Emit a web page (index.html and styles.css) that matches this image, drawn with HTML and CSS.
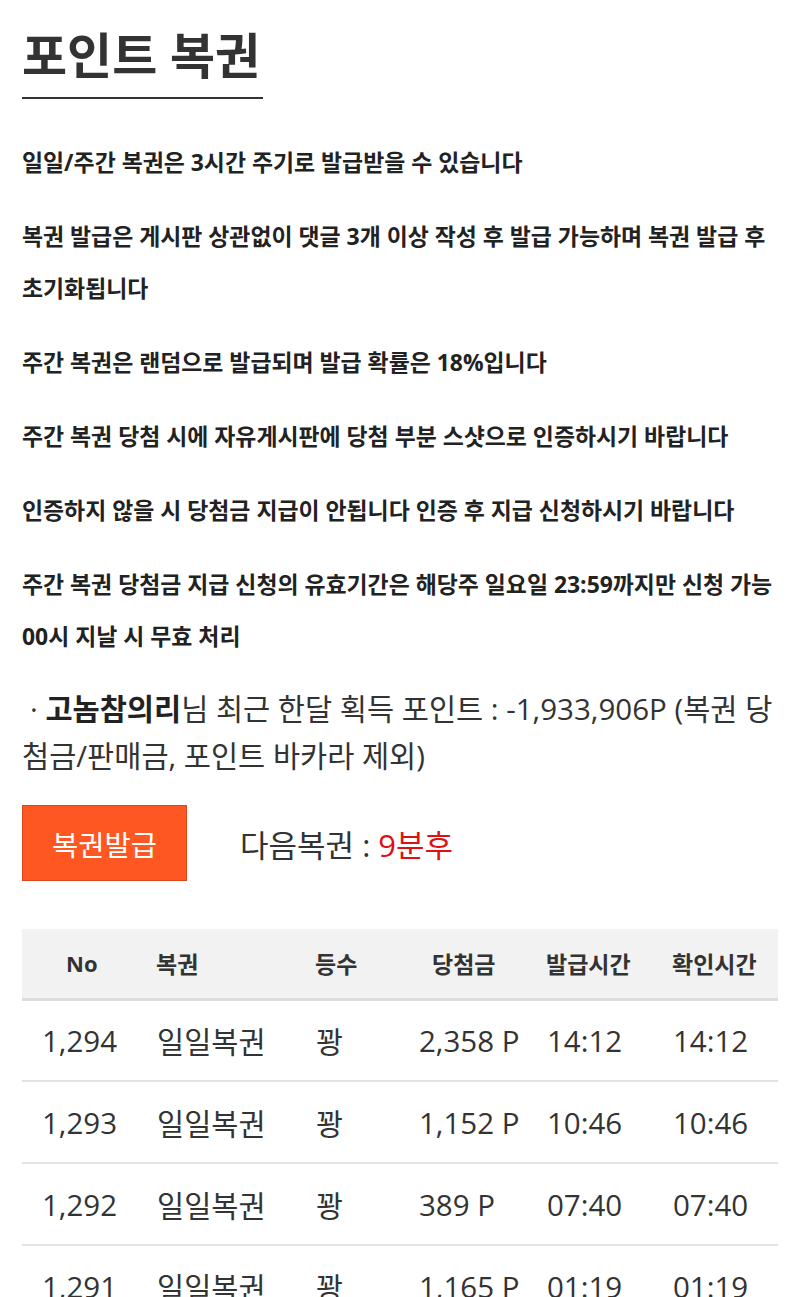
FILE: index.html
```html
<!DOCTYPE html>
<html lang="ko">
<head>
<meta charset="utf-8">
<title>포인트 복권</title>
<link rel="stylesheet" href="styles.css">
</head>
<body>
<div class="page">
  <h1 class="title">포인트 복권</h1>
  <div class="rules">
    <p>일일/주간 복권은 3시간 주기로 발급받을 수 있습니다</p>
    <p>복권 발급은 게시판 상관없이 댓글 3개 이상 작성 후 발급 가능하며 복권 발급 후 초기화됩니다</p>
    <p>주간 복권은 랜덤으로 발급되며 발급 확률은 18%입니다</p>
    <p>주간 복권 당첨 시에 자유게시판에 당첨 부분 스샷으로 인증하시기 바랍니다</p>
    <p>인증하지 않을 시 당첨금 지급이 안됩니다 인증 후 지급 신청하시기 바랍니다</p>
    <p>주간 복권 당첨금 지급 신청의 유효기간은 해당주 일요일 23:59까지만 신청 가능 00시 지날 시 무효 처리</p>
  </div>
  <p class="info"><span class="dot">·</span> <b>고놈참의리</b>님 최근 한달 획득 포인트 : -1,933,906P (복권 당첨금/판매금, 포인트 바카라 제외)</p>
  <div class="issue">
    <button class="issue-btn" type="button">복권발급</button>
    <div class="next">다음복권 : <span class="next-time">9분후</span></div>
  </div>
  <table class="list">
    <colgroup>
      <col class="c1"><col class="c2"><col class="c3"><col class="c4"><col class="c5"><col class="c6">
    </colgroup>
    <thead>
      <tr><th>No</th><th>복권</th><th>등수</th><th>당첨금</th><th>발급시간</th><th>확인시간</th></tr>
    </thead>
    <tbody>
      <tr><td>1,294</td><td>일일복권</td><td>꽝</td><td>2,358 P</td><td>14:12</td><td>14:12</td></tr>
      <tr><td>1,293</td><td>일일복권</td><td>꽝</td><td>1,152 P</td><td>10:46</td><td>10:46</td></tr>
      <tr><td>1,292</td><td>일일복권</td><td>꽝</td><td>389 P</td><td>07:40</td><td>07:40</td></tr>
      <tr><td>1,291</td><td>일일복권</td><td>꽝</td><td>1,165 P</td><td>01:19</td><td>01:19</td></tr>
    </tbody>
  </table>
</div>
</body>
</html>
```

FILE: styles.css
```css
* { box-sizing: border-box; }
html, body { margin: 0; padding: 0; background: #fff; }
body {
  font-family: "Open Sans", "Noto Sans CJK KR", sans-serif;
  color: #333;
}
.page { padding: 0 22px; width: 800px; }

.title {
  display: inline-block;
  margin: 0;
  padding: 24px 3px 11px 0;
  font-size: 49px;
  line-height: 62px;
  font-weight: 700;
  color: #333;
  border-bottom: 2px solid #333;
}

.rules { margin-top: 38px; width: 766px; }
.rules p {
  margin: 0 0 22px;
  font-size: 22.9px;
  line-height: 52px;
  font-weight: 700;
  color: #222;
  word-break: keep-all;
}

.info {
  margin: 0;
  font-size: 29.5px;
  line-height: 47px;
  color: #333;
  text-indent: 8px;
}
.info b { font-weight: 700; color: #222; }

.issue {
  display: flex;
  align-items: center;
  gap: 53px;
  margin-top: 26px;
}
.issue-btn {
  width: 165px;
  height: 76px;
  background: #ff5722;
  border: 1px solid #d9481c;
  color: #fff;
  font-family: "Open Sans", "Noto Sans CJK KR", sans-serif;
  font-size: 28.5px;
  padding: 0;
}
.next { font-size: 31px; color: #333; }
.next-time { color: #dd1111; }

.list {
  margin-top: 48px;
  width: 756px;
  table-layout: fixed;
  border-collapse: collapse;
}
.c1 { width: 134px; }
.c2 { width: 159px; }
.c3 { width: 103px; }
.c4 { width: 128px; }
.c5 { width: 126px; }
.c6 { width: 106px; }

.list th {
  height: 70px;
  background: #f2f2f2;
  border-bottom: 3px solid #ddd;
  font-size: 23px;
  font-weight: 700;
  color: #333;
  text-align: left;
  padding: 0;
}
.list th:nth-child(1) { padding-left: 44px; font-size: 22px; }
.list th:nth-child(4) { padding-left: 14px; }

.list td {
  height: 82px;
  border-bottom: 2px solid #e3e3e3;
  font-size: 29.5px;
  color: #333;
  text-align: left;
  padding: 0 0 0 1px;
  white-space: nowrap;
}
.list td:nth-child(1) { padding-left: 20px; }
```
